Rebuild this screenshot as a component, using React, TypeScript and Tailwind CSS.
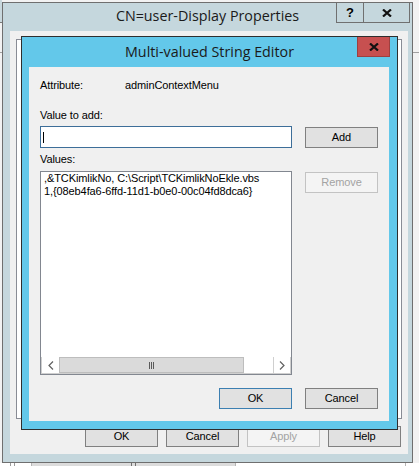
import React from "react";

type BtnProps = {
  children: React.ReactNode;
  variant?: "normal" | "focused" | "disabled";
  className?: string;
};

function Btn({ children, variant = "normal", className = "" }: BtnProps) {
  const v =
    variant === "disabled"
      ? "border-[#c3c3c3] bg-[#f4f4f4] text-[#a3a3a3]"
      : variant === "focused"
      ? "border-[#3c7fb1] bg-[#e1e1e1] text-black"
      : "border-[#808080] bg-[#e1e1e1] text-black";
  return (
    <div
      className={`h-[21px] w-[73px] shrink-0 flex items-center justify-center border ${v} ${className}`}
    >
      {children}
    </div>
  );
}

function XGlyph() {
  return (
    <svg width="10" height="8" viewBox="0 0 10 8">
      <path d="M1 0.5 L9 7.5 M9 0.5 L1 7.5" stroke="#111" strokeWidth="2.2" fill="none" />
    </svg>
  );
}

function Chevron({ dir }: { dir: "left" | "right" }) {
  return (
    <svg width="6" height="9" viewBox="0 0 6 9">
      <polyline
        points={dir === "left" ? "5,0.5 1,4.5 5,8.5" : "1,0.5 5,4.5 1,8.5"}
        fill="none"
        stroke="#606060"
        strokeWidth="1.2"
      />
    </svg>
  );
}

function Grip() {
  return (
    <svg width="6" height="7" viewBox="0 0 6 7">
      <path d="M0.5 0 V7 M2.5 0 V7 M4.5 0 V7" stroke="#5a5a5a" strokeWidth="1" />
    </svg>
  );
}

export default function App() {
  const line1 = ",&TCKimlikNo, C:\\Script\\TCKimlikNoEkle.vbs";
  const line2 = "1,{08eb4fa6-6ffd-11d1-b0e0-00c04fd8dca6}";

  return (
    <div className="relative w-[419px] h-[466px] overflow-hidden bg-[#f2f2f2] font-['Liberation_Sans',Arial,sans-serif] text-[11px] tracking-[-0.1px] text-black">
      {/* background windows peeking out */}
      <div className="absolute left-0 top-0 w-[2px] h-[22px] bg-[#c9d8dd]" />
      <div className="absolute left-0 top-[22px] w-[2px] h-px bg-[#7a7a7a]" />
      <div className="absolute left-0 top-[52px] w-[2px] h-px bg-[#a0a0a0]" />
      <div className="absolute right-0 top-[52px] w-[6px] h-px bg-[#a0a0a0]" />
      <div className="absolute left-0 top-[463px] flex h-[3px] w-[419px] bg-white">
        <div className="ml-[10px] w-px bg-[#9a9a9a]" />
        <div className="ml-[3px] w-px bg-[#9a9a9a]" />
        <div className="ml-[16px] w-px bg-[#b5b5b5]" />
        <div className="w-[203px] bg-[#dcdcdc] flex justify-center">
          <div className="w-[5px] border-x border-[#707070]" />
        </div>
        <div className="w-px bg-[#b5b5b5]" />
        <div className="ml-[169px] w-px bg-[#b5b5b5]" />
      </div>

      {/* Outer dialog: CN=user-Display Properties */}
      <div className="absolute left-[2px] top-[2px] w-[411px] h-[461px] border border-[#6f6f6f] bg-[#c5d7dd] flex flex-col">
        <div className="flex h-[28px] shrink-0">
          <div className="w-[76px] shrink-0" />
          <div className="flex-1 h-[26px] leading-[26px] text-center font-['Open_Sans',sans-serif] text-[14.3px] tracking-normal text-[#1a1a1a]">
            CN=user-Display Properties
          </div>
          <div className="flex h-[20px] mr-[2px] shrink-0 border-b border-l border-r border-[#707070]">
            <div className="w-[27px] border-r border-[#707070] flex items-center justify-center font-bold text-[13px] tracking-normal">
              ?
            </div>
            <div className="w-[45px] flex items-center justify-center">
              <XGlyph />
            </div>
          </div>
        </div>
        <div className="flex-1 flex flex-col pl-[7px] pr-[4px] pb-[8px]">
          <div className="flex-1 bg-[#f0f0f0] flex flex-col">
            <div className="mt-[8px] mx-[6px] h-[380px] border border-[#898c95] bg-white" />
            <div className="mt-[7px] mr-[7px] flex justify-end gap-[8px]">
              <Btn>OK</Btn>
              <Btn>Cancel</Btn>
              <Btn variant="disabled">Apply</Btn>
              <Btn>Help</Btn>
            </div>
          </div>
        </div>
      </div>

      {/* Inner dialog: Multi-valued String Editor */}
      <div className="absolute left-[21px] top-[36px] w-[377px] h-[394px] border border-[#2e2e2e] bg-[#63c8ea] flex flex-col">
        <div className="flex h-[30px] shrink-0">
          <div className="w-[40px] shrink-0" />
          <div className="flex-1 h-[30px] leading-[30px] text-center font-['Open_Sans',sans-serif] text-[14.3px] tracking-normal text-[#1a1a1a]">
            Multi-valued String Editor
          </div>
          <div className="w-[33px] h-[20px] mr-[7px] shrink-0 bg-[#c75050] border-x border-b border-[#9e3f3f] flex items-center justify-center">
            <XGlyph />
          </div>
        </div>
        <div className="ml-[7px] mr-[8px] mb-[8px] flex-1 bg-[#f0f0f0] px-[11px] flex flex-col">
          <div className="mt-[12px] flex h-[13px] leading-[13px]">
            <div className="w-[85px]">Attribute:</div>
            <div>adminContextMenu</div>
          </div>
          <div className="mt-[17px] h-[13px] leading-[13px]">Value to add:</div>
          <div className="mt-[4px] flex gap-[13px] items-start">
            <div className="w-[252px] h-[22px] border border-[#3d6e99] bg-white flex items-center pl-[2px]">
              <div className="w-px h-[11px] bg-black" />
            </div>
            <Btn className="mt-[1px]">Add</Btn>
          </div>
          <div className="mt-[5px] h-[13px] leading-[13px]">Values:</div>
          <div className="mt-[5px] flex gap-[13px] items-start">
            <div className="w-[252px] h-[204px] border border-[#828790] bg-white flex flex-col">
              <div className="flex-1 pl-[3px] leading-[13px] whitespace-nowrap overflow-hidden">
                <div>{line1}</div>
                <div>{line2}</div>
              </div>
              <div className="flex h-[17px] shrink-0 border-x border-b border-[#cfcfcf]">
                <div className="w-[17px] flex items-center justify-center bg-white">
                  <Chevron dir="left" />
                </div>
                <div className="w-[185px] bg-[#dadada] border border-[#bdbdbd] flex items-center justify-center">
                  <Grip />
                </div>
                <div className="flex-1 bg-white" />
                <div className="w-[17px] border-l border-[#cfcfcf] flex items-center justify-center bg-white">
                  <Chevron dir="right" />
                </div>
              </div>
            </div>
            <Btn variant="disabled" className="mt-[1px]">Remove</Btn>
          </div>
          <div className="mt-[13px] flex justify-end gap-[13px]">
            <Btn variant="focused">OK</Btn>
            <Btn>Cancel</Btn>
          </div>
        </div>
      </div>
    </div>
  );
}
